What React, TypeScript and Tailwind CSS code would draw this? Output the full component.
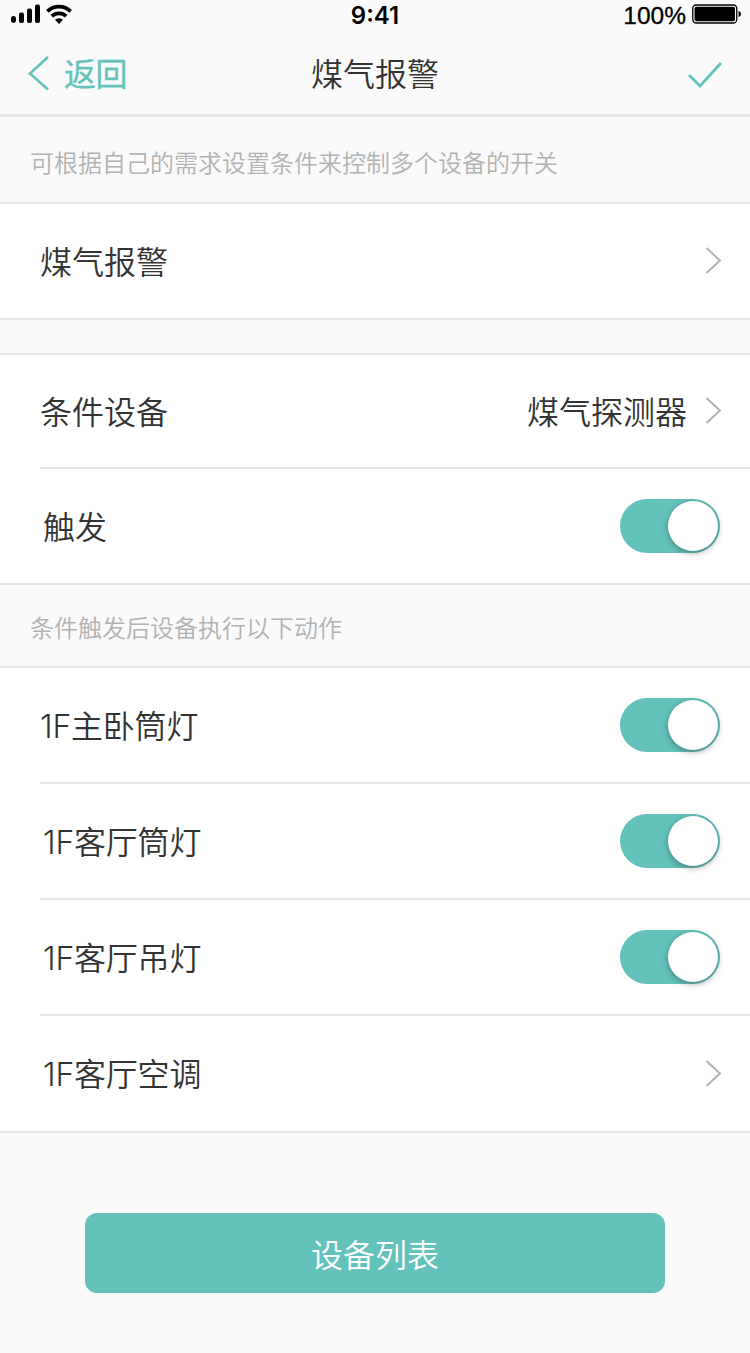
import React, { useState } from 'react';

const Chevron: React.FC = () => (
    <svg width="17" height="28" viewBox="0 0 17 28" fill="none" stroke="#b2b2b2" strokeWidth="2" className="shrink-0">
        <path d="M1.5 1 15 13.5 1.5 26" />
    </svg>
);

const Toggle: React.FC<{ on: boolean; onClick: () => void }> = ({ on, onClick }) => (
    <button
        onClick={onClick}
        className={`flex h-[54px] w-[100px] items-center rounded-full p-[2px] ${on ? 'justify-end bg-[#64c2bc]' : 'justify-start bg-gray-300'}`}
    >
        <span className="h-[50px] w-[50px] rounded-full bg-white shadow-[0_2px_6px_rgba(0,0,0,0.35)]" />
    </button>
);

const StatusBar: React.FC = () => (
    <div className="grid h-8 grid-cols-3 items-center text-2xl leading-8 text-black font-['Inter',sans-serif]">
        <svg width="74" height="32" viewBox="0 0 74 32">
            <rect x="11" y="16" width="5" height="7" rx="2.4" />
            <rect x="19" y="12.5" width="5" height="10.5" rx="2" />
            <rect x="27" y="8.5" width="5" height="14.5" rx="2" />
            <rect x="35" y="4.5" width="5" height="18.5" rx="2" />
            <g fill="none" stroke="#000" strokeWidth="3.7">
                <path d="M47.3 11.4a16.8 16.8 0 0 1 23.4 0" />
                <path d="M51.8 16.2a10.4 10.4 0 0 1 14.4 0" />
            </g>
            <path d="M59 24l-4-4.2a5.8 5.8 0 0 1 8 0z" />
        </svg>
        <span className="text-center font-semibold">9:41</span>
        <div className="flex items-center justify-end gap-[6px] pr-2">
            <span className="font-['Liberation_Sans',sans-serif] text-[24.5px] [-webkit-text-stroke:0.3px_black]">100%</span>
            <svg width="50" height="20" viewBox="0 0 50 20" className="-mt-1">
                <rect x="0.75" y="1" width="44" height="18" rx="3.5" fill="none" stroke="#000" strokeWidth="1.3" />
                <rect x="2.5" y="2.7" width="40.5" height="14.6" rx="2" />
                <path d="M46.5 7c3.4 1 3.4 5 0 6z" />
            </svg>
        </div>
    </div>
);

const App: React.FC = () => {
    const [triggered, setTriggered] = useState(true);
    const [devices, setDevices] = useState([
        { name: '1F主卧筒灯', on: true },
        { name: '1F客厅筒灯', on: true },
        { name: '1F客厅吊灯', on: true },
    ]);

    const toggleDevice = (index: number) => {
        setDevices(devices.map((d, i) => (i === index ? { ...d, on: !d.on } : d)));
    };

    return (
        <div className="h-[1353px] w-[750px] bg-[#fafafa] text-[32px] leading-[48px] font-[350] text-[#333] font-['Inter','Noto_Sans_CJK_SC',sans-serif]">
            <StatusBar />
            <header className="grid h-[85px] grid-cols-3 items-center border-b-[3px] border-[#e5e5e5] px-7">
                <button className="flex items-center gap-[15px] font-normal text-[#64c2bc]">
                    <svg width="21" height="36" viewBox="0 0 21 36" fill="none" stroke="currentColor" strokeWidth="2.6">
                        <path d="M20 2 2 18.5l18 16" />
                    </svg>
                    <span className="pt-[3px] tracking-[-0.5px] [-webkit-text-stroke:0.3px_#64c2bc]">返回</span>
                </button>
                <h1 className="pt-[3px] text-center">煤气报警</h1>
                <svg width="34" height="28" viewBox="0 0 34 28" fill="none" stroke="#64c2bc" strokeWidth="2.8" className="mt-1 justify-self-end">
                    <path d="M1 14l11 11L33 2" />
                </svg>
            </header>

            <p className="flex h-[87px] items-center border-b-2 border-[#e5e5e5] px-[30px] pt-[9px] text-2xl text-[#b2b2b2]">
                可根据自己的需求设置条件来控制多个设备的开关
            </p>
            <div className="flex h-[116px] items-center justify-between border-b-2 border-[#e5e5e5] bg-white pr-7 pl-10">
                <span className="pt-1">煤气报警</span>
                <Chevron />
            </div>

            <section className="mt-[33px] border-y-2 border-[#e5e5e5] bg-white pl-10">
                <div className="flex h-[114px] items-center justify-between border-b-2 border-[#e5e5e5] pr-7">
                    <span className="pt-[3px]">条件设备</span>
                    <div className="flex items-center gap-[18px]">
                        <span className="pt-[3px]">煤气探测器</span>
                        <Chevron />
                    </div>
                </div>
                <div className="flex h-[114px] items-center justify-between pr-[30px] pl-[3px]">
                    <span className="pt-1">触发</span>
                    <Toggle on={triggered} onClick={() => setTriggered(!triggered)} />
                </div>
            </section>

            <p className="flex h-[83px] items-center border-b-2 border-[#e5e5e5] px-[30px] pt-[6px] text-2xl text-[#b2b2b2]">
                条件触发后设备执行以下动作
            </p>
            <section className="border-b-2 border-[#e5e5e5] bg-white pl-10">
                {devices.map((device, i) => (
                    <div
                        key={device.name}
                        className={`flex h-[116px] items-center justify-between border-b-2 border-[#e5e5e5] pr-[30px] ${i > 0 ? 'pl-[3px]' : ''}`}
                    >
                        <span className="pt-[3px] tracking-[-0.2px]">{device.name}</span>
                        <Toggle on={device.on} onClick={() => toggleDevice(i)} />
                    </div>
                ))}
                <div className="flex h-[115px] items-center justify-between pr-7 pl-[3px]">
                    <span className="pt-[3px] tracking-[-0.2px]">1F客厅空调</span>
                    <Chevron />
                </div>
            </section>

            <button className="mx-auto mt-20 flex h-20 w-[580px] items-center justify-center rounded-xl bg-[#64c2bc] pt-[5px] text-white">
                设备列表
            </button>
        </div>
    );
};

export default App;
